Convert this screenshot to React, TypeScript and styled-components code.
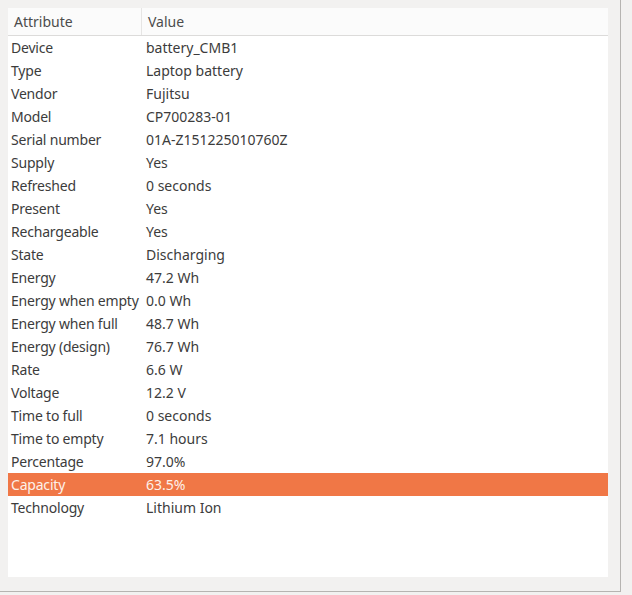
import React from "react"
import styled, { createGlobalStyle } from "styled-components"

const GlobalStyle = createGlobalStyle`
    html, body {
        margin: 0;
        padding: 0;
        background: #f2f1f0;
    }
    body {
        font-family: "Noto Sans", "DejaVu Sans", sans-serif;
    }
`

const Frame = styled.div`
    width: 621px;
    height: 592px;
    box-sizing: border-box;
    border-right: 1px solid #b6b4b1;
    border-bottom: 1px solid #b6b4b1;
    padding: 8px 12px 14px 8px;
`

const Panel = styled.div`
    height: 100%;
    background: #ffffff;
    display: flex;
    flex-direction: column;
`

const HeaderRow = styled.div`
    display: grid;
    grid-template-columns: 134px 1fr;
    height: 27px;
    background: #fbfbfb;
    border-bottom: 1px solid #dcdbda;
`

const HeaderCell = styled.div<{ $first?: boolean }>`
    display: flex;
    align-items: center;
    padding-left: 6px;
    font-size: 14px;
    color: #4c4c4c;
    border-right: ${p => (p.$first ? "1px solid #e6e5e4" : "none")};
`

const Row = styled.div<{ $selected?: boolean }>`
    display: grid;
    grid-template-columns: 134px 1fr;
    height: 23px;
    align-items: center;
    background: ${p => (p.$selected ? "#f07746" : "transparent")};
    color: ${p => (p.$selected ? "#fdf1ea" : "#3c3c3c")};
    font-size: 14px;
`

const Cell = styled.div<{ $value?: boolean }>`
    padding-left: ${p => (p.$value ? "4px" : "3px")};
    white-space: nowrap;
    overflow: hidden;
    letter-spacing: ${p => (p.$value ? "0" : "-0.2px")};
`

const rows: [string, string][] = [
    ["Device", "battery_CMB1"],
    ["Type", "Laptop battery"],
    ["Vendor", "Fujitsu"],
    ["Model", "CP700283-01"],
    ["Serial number", "01A-Z151225010760Z"],
    ["Supply", "Yes"],
    ["Refreshed", "0 seconds"],
    ["Present", "Yes"],
    ["Rechargeable", "Yes"],
    ["State", "Discharging"],
    ["Energy", "47.2 Wh"],
    ["Energy when empty", "0.0 Wh"],
    ["Energy when full", "48.7 Wh"],
    ["Energy (design)", "76.7 Wh"],
    ["Rate", "6.6 W"],
    ["Voltage", "12.2 V"],
    ["Time to full", "0 seconds"],
    ["Time to empty", "7.1 hours"],
    ["Percentage", "97.0%"],
    ["Capacity", "63.5%"],
    ["Technology", "Lithium Ion"],
]

export default function App() {
    return (
        <>
            <GlobalStyle />
            <Frame>
                <Panel>
                    <HeaderRow>
                        <HeaderCell $first>Attribute</HeaderCell>
                        <HeaderCell>Value</HeaderCell>
                    </HeaderRow>
                    {rows.map(([name, value]) => (
                        <Row key={name} $selected={name === "Capacity"}>
                            <Cell>{name}</Cell>
                            <Cell $value>{value}</Cell>
                        </Row>
                    ))}
                </Panel>
            </Frame>
        </>
    )
}
